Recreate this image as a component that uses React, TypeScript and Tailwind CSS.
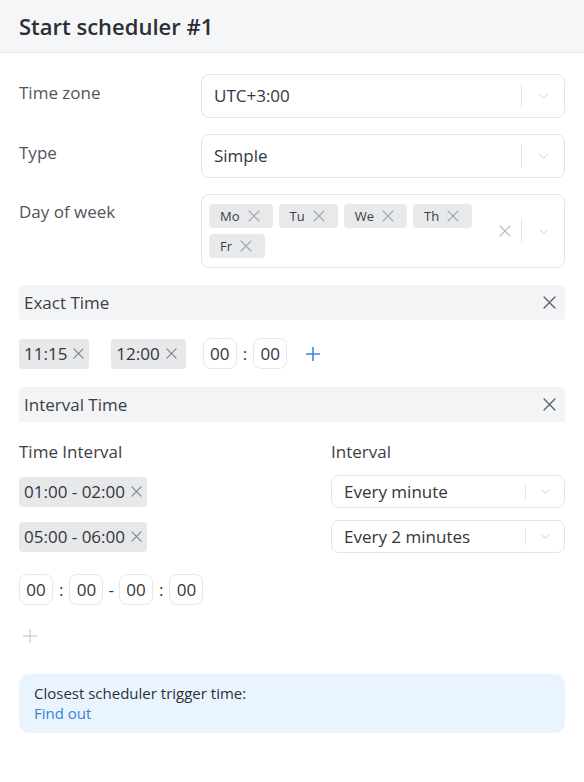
import { ChevronDown } from 'lucide-react'

const days = ['Mo', 'Tu', 'We', 'Th', 'Fr']

function XIcon({ size, className, stroke = 1.2 }: { size: number; className?: string; stroke?: number }) {
  return (
    <svg width={size} height={size} viewBox="0 0 12 12" className={className} fill="none">
      <path d="M1 1L11 11M11 1L1 11" stroke="currentColor" strokeWidth={stroke} strokeLinecap="round" />
    </svg>
  )
}

function PlusIcon({ className, stroke = 1.6 }: { className?: string; stroke?: number }) {
  return (
    <svg width="16" height="16" viewBox="0 0 16 16" className={className} fill="none">
      <path d="M8 1V15M1 8H15" stroke="currentColor" strokeWidth={stroke} />
    </svg>
  )
}

function Select({ value, small }: { value: string; small?: boolean }) {
  return (
    <div
      className={`flex items-center rounded-[8px] border border-[#e3e5e8] bg-white pl-[12px] ${
        small ? 'h-[33px]' : 'h-[44px]'
      }`}
    >
      <span className="flex-1 text-[17px] leading-[24px] text-[#33363c]">{value}</span>
      <span className={`w-px bg-[#e3e5e8] ${small ? 'h-[16px]' : 'h-[24px]'}`}></span>
      <span className={`flex justify-center ${small ? 'w-[38px]' : 'w-[42px]'}`}>
        <ChevronDown className="h-[15px] w-[15px] text-[#c3c7cd]" strokeWidth={1.4} />
      </span>
    </div>
  )
}

function TimeBox() {
  return (
    <div className="flex h-[31px] w-[34px] items-center justify-center rounded-[8px] border border-[#e6e8eb] text-[17px] leading-[24px] text-[#33363c]">
      00
    </div>
  )
}

function TimeChip({ label, wide }: { label: string; wide?: boolean }) {
  return (
    <div
      className={`flex h-[30px] items-center gap-[6px] rounded-[4px] bg-[#e7e8ea] pl-[5px] text-[17px] leading-[24px] text-[#33363c] ${
        wide ? 'pr-[9px]' : 'pr-[5px]'
      }`}
    >
      {label}
      <XIcon size={11} className="text-[#7d828a]" />
    </div>
  )
}

function SectionBar({ title }: { title: string }) {
  return (
    <div className="flex h-[35px] items-center justify-between rounded-[4px] bg-[#f3f4f6] pl-[5px] pr-[9px]">
      <span className="text-[17px] leading-[24px] text-[#3a3e45]">{title}</span>
      <XIcon size={13} className="text-[#5f646b]" stroke={1.3} />
    </div>
  )
}

export default function App() {
  return (
    <div className="min-h-[782px] w-[584px] bg-white" style={{ fontFamily: '"Open Sans", "Noto Sans", sans-serif' }}>
      {/* Header */}
      <div className="flex h-[53px] items-center border-b border-[#e6e8eb] bg-[#f5f6f8] px-[19px]">
        <h1 className="text-[22px] font-semibold leading-[28px] text-[#2b2e34]">Start scheduler #1</h1>
      </div>

      <div className="px-[19px] pt-[21px]">
        {/* Form rows */}
        <div className="flex flex-col gap-[16px]">
          <div className="grid grid-cols-[182px_1fr]">
            <span className="pt-[7px] text-[17px] leading-[24px] text-[#50555c]">Time zone</span>
            <Select value="UTC+3:00" />
          </div>
          <div className="grid grid-cols-[182px_1fr]">
            <span className="pt-[7px] text-[17px] leading-[24px] text-[#50555c]">Type</span>
            <Select value="Simple" />
          </div>
          <div className="grid grid-cols-[182px_1fr]">
            <span className="pt-[6px] text-[17px] leading-[24px] text-[#50555c]">Day of week</span>
            <div className="flex h-[74px] items-center rounded-[8px] border border-[#e3e5e8] bg-white">
              <div className="flex flex-1 flex-wrap content-start gap-x-[6px] gap-y-[6px] self-start pl-[7px] pt-[9px]">
                {days.map((d) => (
                  <div
                    key={d}
                    className="flex h-[24px] items-center gap-[8px] rounded-[4px] bg-[#e8e9eb] pl-[11px] pr-[13px] text-[13px] leading-[18px] text-[#3a3e45]"
                  >
                    {d}
                    <XIcon size={12} className="text-[#a3a8ae]" stroke={1.1} />
                  </div>
                ))}
              </div>
              <XIcon size={12} className="mr-[10px] text-[#b5b9bf]" stroke={1.1} />
              <span className="h-[24px] w-px bg-[#e3e5e8]"></span>
              <span className="flex w-[42px] justify-center">
                <ChevronDown className="h-[15px] w-[15px] text-[#c3c7cd]" strokeWidth={1.4} />
              </span>
            </div>
          </div>
        </div>

        {/* Exact time */}
        <div className="mt-[17px]">
          <SectionBar title="Exact Time" />
          <div className="mt-[18px] flex items-center">
            <TimeChip label="11:15" />
            <div className="ml-[22px]">
              <TimeChip label="12:00" wide />
            </div>
            <div className="ml-[17px] flex items-center gap-[6px]">
              <TimeBox />
              <span className="text-[17px] text-[#33363c]">:</span>
              <TimeBox />
            </div>
            <PlusIcon className="ml-[18px] text-[#3d85d8]" />
          </div>
        </div>

        {/* Interval time */}
        <div className="mt-[18px]">
          <SectionBar title="Interval Time" />
          <div className="mt-[18px] grid grid-cols-[312px_1fr] gap-y-[12px]">
            <span className="-mb-px text-[17px] leading-[24px] text-[#3a3e45]">Time Interval</span>
            <span className="-mb-px text-[17px] leading-[24px] text-[#3a3e45]">Interval</span>
            <div className="flex items-center">
              <TimeChip label="01:00 - 02:00" />
            </div>
            <Select value="Every minute" small />
            <div className="flex items-center">
              <TimeChip label="05:00 - 06:00" />
            </div>
            <Select value="Every 2 minutes" small />
          </div>

          <div className="mt-[21px] flex items-center gap-[6px]">
            <TimeBox />
            <span className="text-[17px] text-[#33363c]">:</span>
            <TimeBox />
            <span className="-mx-[1px] text-[17px] text-[#33363c]">-</span>
            <TimeBox />
            <span className="text-[17px] text-[#33363c]">:</span>
            <TimeBox />
          </div>

          <PlusIcon className="ml-[3px] mt-[23px] text-[#c8d6e6]" stroke={1.3} />
        </div>

        {/* Info */}
        <div className="mt-[30px] rounded-[10px] bg-[#e9f4fe] px-[15px] pb-[10px] pt-[9px] text-[15px] leading-[20px]">
          <div className="text-[#2d3036]">Closest scheduler trigger time:</div>
          <div className="font-medium text-[#3a82d2]">Find out</div>
        </div>
      </div>
    </div>
  )
}
